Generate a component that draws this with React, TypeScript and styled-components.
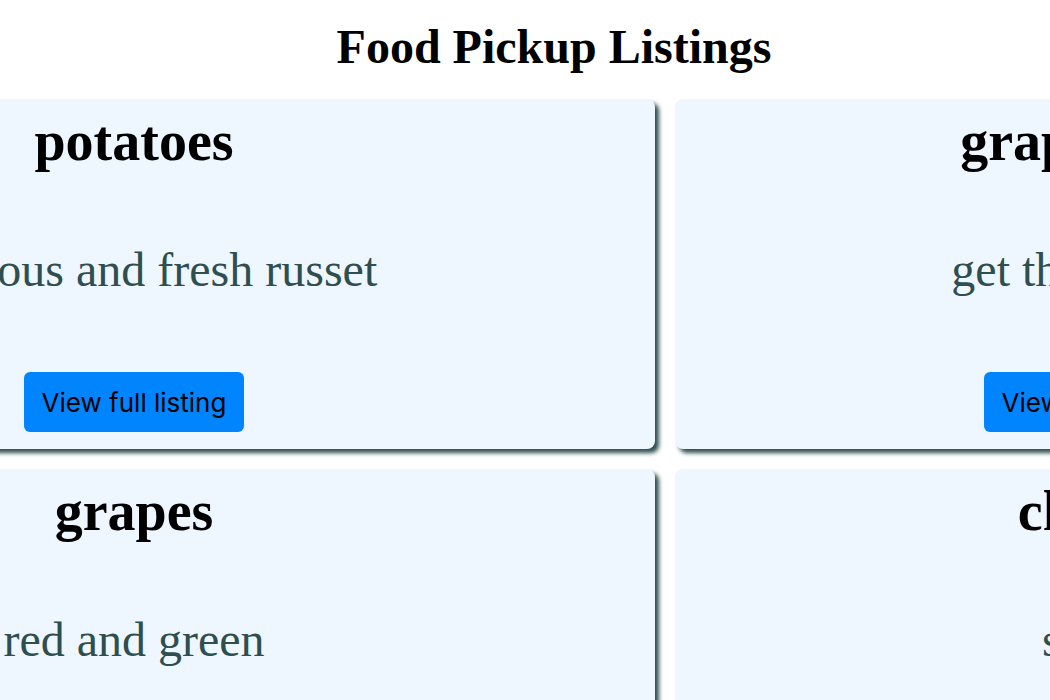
import React from 'react';
import styled, { createGlobalStyle } from 'styled-components';

const GlobalStyle = createGlobalStyle`
  * { box-sizing: border-box; }
  html { overflow: hidden; }
  body {
    margin: 0;
    background: #fff;
    font-family: "Liberation Serif", "Times New Roman", serif;
  }
`;

const Page = styled.main`
  height: 100vh;
  overflow: hidden;
`;

const PageTitle = styled.h1`
  margin: 0;
  padding: 19px 0 25px 58px;
  font-size: 48px;
  line-height: 55px;
  text-align: center;
`;

const Listings = styled.section`
  display: grid;
  grid-template-columns: 1fr 1fr;
  gap: 20px;
  width: calc(180vw + 10px);
  margin-left: calc(9px - 28vw);
`;

const Card = styled.article`
  display: flex;
  flex-direction: column;
  align-items: center;
  padding: 10px 102px 17px 0;
  border-radius: 8px;
  background: #eef6ff;
  box-shadow: 4px 4px 4px darkslategray;
`;

const CardTitle = styled.h2`
  margin: 0 0 69px;
  font-size: 56px;
  line-height: 64px;
`;

const Description = styled.p`
  margin: 0 0 75px;
  color: darkslategray;
  font-size: 48px;
  line-height: 55px;
`;

const ViewButton = styled.button`
  height: 60px;
  padding: 2px 18px 0;
  border: 0;
  border-radius: 6px;
  background: #0085ff;
  color: #000;
  font-family: Inter, sans-serif;
  font-size: 26px;
  line-height: 32px;
  white-space: nowrap;
`;

const listings = [
  { title: 'potatoes', description: 'delicious and fresh russet' },
  { title: 'grapefruits', description: 'get them today' },
  { title: 'grapes', description: 'red and green' },
  { title: 'cheese', description: 'swiss' },
];

export default function App() {
  return (
    <>
      <GlobalStyle />
      <Page>
        <PageTitle>Food Pickup Listings</PageTitle>
        <Listings>
          {listings.map(({ title, description }) => (
            <Card key={title}>
              <CardTitle>{title}</CardTitle>
              <Description>{description}</Description>
              <ViewButton type="button">View full listing</ViewButton>
            </Card>
          ))}
        </Listings>
      </Page>
    </>
  );
}
